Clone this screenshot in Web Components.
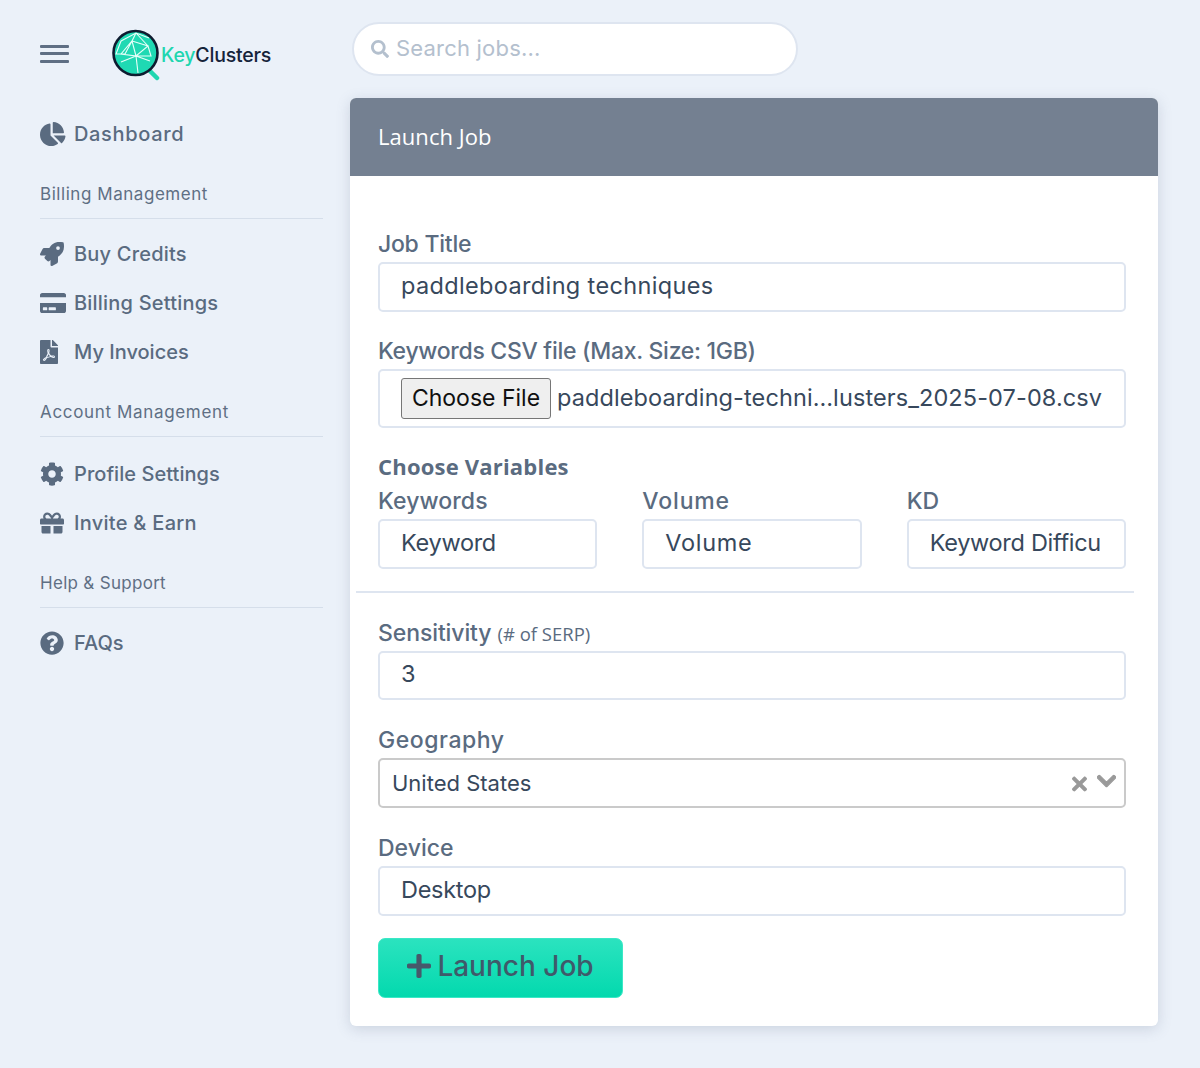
<!DOCTYPE html>
<html><head><meta charset="utf-8"><title>Launch Job</title>
<style>
html,body{margin:0;padding:0;height:1068px;overflow:hidden;background:#ebf1f9;font-family:Inter,"Liberation Sans",sans-serif;color:#5a6b80}
</style></head><body>
<app-shell>
  <side-bar slot="side">
    <top-brand></top-brand>
    <nav-item icon="pie" style="--ls:.65px">Dashboard</nav-item>
    <nav-section top="24" bottom="10" style="--ls:.55px">Billing Management</nav-section>
    <nav-item icon="rocket" style="--ls:.2px">Buy Credits</nav-item>
    <nav-item icon="card" style="--ls:.2px">Billing Settings</nav-item>
    <nav-item icon="pdf" style="--ls:0px">My Invoices</nav-item>
    <nav-section top="24" bottom="12" style="--ls:.66px">Account Management</nav-section>
    <nav-item icon="cog" style="--ls:.05px">Profile Settings</nav-item>
    <nav-item icon="gift" style="--ls:.28px">Invite &amp; Earn</nav-item>
    <nav-section top="24" bottom="10" style="--ls:.3px">Help &amp; Support</nav-section>
    <nav-item icon="help" style="--ls:0px">FAQs</nav-item>
  </side-bar>
  <main-area slot="main">
    <search-box>Search jobs...</search-box>
    <job-card heading="Launch Job">
      <form-field label="Job Title" style="--lls:-.25px"><text-box style="--ls:.35px">paddleboarding techniques</text-box></form-field>
      <form-field label="Keywords CSV file (Max. Size: 1GB)" style="--lls:-.29px;--after:27px"><file-box style="--ls:.1px">paddleboarding-techni…lusters_2025-07-08.csv</file-box></form-field>
      <var-group heading="Choose Variables">
        <form-field label="Keywords" flush style="--lls:.1px"><text-box style="--ls:-.3px">Keyword</text-box></form-field>
        <form-field label="Volume" flush style="--lls:.85px"><text-box style="--ls:.7px">Volume</text-box></form-field>
        <form-field label="KD" flush><text-box style="--ls:-.3px">Keyword Difficu</text-box></form-field>
      </var-group>
      <form-field label="Sensitivity" note="(# of SERP)" style="--lls:-.1px"><text-box>3</text-box></form-field>
      <form-field label="Geography" style="--lls:.55px;--after:28px"><select-box>United States</select-box></form-field>
      <form-field label="Device" style="--lls:0px;--after:22px"><text-box style="--ls:-.3px;--h:50px">Desktop</text-box></form-field>
      <launch-button>Launch Job</launch-button>
    </job-card>
  </main-area>
</app-shell>
<script>
const ICONS={
pie:['0 0 544 512','M527.79 288H290.5l158.03 158.03c6.04 6.04 15.98 6.53 22.19.68 38.7-36.46 65.32-85.61 73.13-140.86 1.34-9.46-6.51-17.85-16.06-17.85zm-15.83-64.8C503.72 103.74 408.26 8.28 288.8.04 279.68-.59 272 7.1 272 16.24V240h223.77c9.14 0 16.82-7.68 16.19-16.8zM224 288V50.71c0-9.55-8.39-17.4-17.85-16.06C86.99 51.49-4.1 155.6.14 280.37 4.5 408.51 114.83 513.59 243.03 511.98c50.4-.63 96.97-16.87 135.26-44.03 7.9-5.6 8.42-17.23 1.57-24.08L224 288z'],
rocket:['0 0 512 512','M505.12019,19.09375c-1.18945-5.53125-6.65819-11-12.207-12.1875C460.716,0,435.507,0,410.40747,0,307.17523,0,245.26909,55.20312,199.05238,128H94.83772c-16.34763.01562-35.55658,11.875-42.88664,26.48438L2.51562,253.29688A28.4,28.4,0,0,0,0,264a24.00867,24.00867,0,0,0,24.00582,24H127.81618l-22.47457,22.46875c-11.36521,11.36133-12.99607,32.25781,0,45.25L156.24582,406.625c11.15623,11.1875,32.15619,13.15625,45.27726,0l22.47457-22.46875V488a24.00867,24.00867,0,0,0,24.00581,24,28.55934,28.55934,0,0,0,10.707-2.51562l98.72834-49.39063c14.62888-7.29687,26.50776-26.5,26.50776-42.85937V312.79688c72.59753-46.3125,128.03493-108.40626,128.03493-211.09376C512.07526,76.5,512.07526,51.29688,505.12019,19.09375ZM384.04033,168A40,40,0,1,1,424.05,128,40.02322,40.02322,0,0,1,384.04033,168Z'],
card:['0 0 576 512','M0 432c0 26.5 21.5 48 48 48h480c26.5 0 48-21.5 48-48V256H0v176zm192-68c0-6.6 5.4-12 12-12h136c6.6 0 12 5.4 12 12v40c0 6.6-5.4 12-12 12H204c-6.6 0-12-5.4-12-12v-40zm-128 0c0-6.6 5.4-12 12-12h72c6.6 0 12 5.4 12 12v40c0 6.6-5.4 12-12 12H76c-6.6 0-12-5.4-12-12v-40zM576 80v48H0V80c0-26.5 21.5-48 48-48h480c26.5 0 48 21.5 48 48z'],
pdf:['0 0 384 512','M181.9 256.1c-5-16-4.9-46.9-2-46.9 8.4 0 7.6 36.9 2 46.9zm-1.7 47.2c-7.7 20.2-17.3 43.3-28.4 62.7 18.3-7 39-17.2 62.9-21.9-12.7-9.6-24.9-23.4-34.5-40.8zM86.1 428.1c0 .8 13.2-5.4 34.9-40.2-6.7 6.3-29.1 24.5-34.9 40.2zM248 160h136v328c0 13.3-10.7 24-24 24H24c-13.3 0-24-10.7-24-24V24C0 10.7 10.7 0 24 0h200v136c0 13.2 10.8 24 24 24zm-8 171.8c-20-12.2-33.3-29-42.7-53.8 4.5-18.5 11.6-46.6 6.2-64.2-4.7-29.4-42.4-26.5-47.8-6.8-5 18.3-.4 44.1 8.1 77-11.6 27.6-28.7 64.6-40.8 85.8-.1 0-.1.1-.2.1-27.1 13.9-73.6 44.5-54.5 68 5.6 6.9 16 10 21.5 10 17.9 0 35.7-18 61.1-61.8 25.8-8.5 54.1-19.1 79-23.2 21.7 11.8 47.1 19.5 64 19.5 29.2 0 31.2-32 19.7-43.4-13.9-13.6-54.3-9.7-73.6-7.2zM377 105L279 7c-4.5-4.5-10.6-7-17-7h-6v128h128v-6.1c0-6.3-2.5-12.4-7-16.9zm-74.1 255.3c4.1-2.7-2.5-11.9-42.8-9 37.1 15.8 42.8 9 42.8 9z'],
cog:['0 0 512 512','M487.4 315.7l-42.6-24.6c4.3-23.2 4.3-47 0-70.2l42.6-24.6c4.9-2.8 7.1-8.6 5.5-14-11.1-35.6-30-67.8-54.7-94.6-3.8-4.1-10-5.1-14.8-2.3L380.8 110c-17.9-15.4-38.5-27.3-60.8-35.1V25.8c0-5.6-3.9-10.5-9.4-11.7-36.7-8.2-74.3-7.8-109.2 0-5.5 1.2-9.4 6.1-9.4 11.7V75c-22.2 7.9-42.8 19.8-60.8 35.1L88.7 85.5c-4.9-2.8-11-1.9-14.8 2.3-24.7 26.7-43.6 58.9-54.7 94.6-1.7 5.4.6 11.2 5.5 14L67.3 221c-4.3 23.2-4.3 47 0 70.2l-42.6 24.6c-4.9 2.8-7.1 8.6-5.5 14 11.1 35.6 30 67.8 54.7 94.6 3.8 4.1 10 5.1 14.8 2.3l42.6-24.6c17.9 15.4 38.5 27.3 60.8 35.1v49.2c0 5.6 3.9 10.5 9.4 11.7 36.7 8.2 74.3 7.8 109.2 0 5.5-1.2 9.4-6.1 9.4-11.7v-49.2c22.2-7.9 42.8-19.8 60.8-35.1l42.6 24.6c4.9 2.8 11 1.9 14.8-2.3 24.7-26.7 43.6-58.9 54.7-94.6 1.5-5.5-.7-11.3-5.6-14.1zM256 336c-44.1 0-80-35.9-80-80s35.9-80 80-80 80 35.9 80 80-35.9 80-80 80z'],
gift:['0 0 512 512','M32 448c0 17.7 14.3 32 32 32h160V320H32v128zm256 32h160c17.7 0 32-14.3 32-32V320H288v160zm192-320h-42.1c6.2-12.1 10.1-25.5 10.1-40 0-48.5-39.5-88-88-88-41.6 0-68.5 21.3-103 68.3-34.5-47-61.4-68.3-103-68.3-48.5 0-88 39.5-88 88 0 14.5 3.8 27.9 10.1 40H32c-17.7 0-32 14.3-32 32v80c0 8.8 7.2 16 16 16h480c8.8 0 16-7.2 16-16v-80c0-17.7-14.3-32-32-32zm-326.1 0c-22.1 0-40-17.9-40-40s17.9-40 40-40c19.9 0 34.6 3.3 86.1 80h-86.1zm206.1 0h-86.1c51.4-76.5 65.7-80 86.1-80 22.1 0 40 17.9 40 40s-17.9 40-40 40z'],
help:['0 0 512 512','M504 256c0 136.997-111.043 248-248 248S8 392.997 8 256C8 119.083 119.043 8 256 8s248 111.083 248 248zM262.655 90c-54.497 0-89.255 22.957-116.549 63.758-3.536 5.286-2.353 12.415 2.715 16.258l34.699 26.31c5.205 3.947 12.621 3.008 16.665-2.122 17.864-22.658 30.113-35.797 57.303-35.797 20.429 0 45.698 13.148 45.698 32.958 0 14.976-12.363 22.667-32.534 33.976C247.128 238.528 216 254.941 216 296v4c0 6.627 5.373 12 12 12h56c6.627 0 12-5.373 12-12v-1.333c0-28.462 83.186-29.647 83.186-106.667 0-58.002-60.165-102-116.531-102zM256 338c-25.365 0-46 20.635-46 46 0 25.364 20.635 46 46 46s46-20.636 46-46c0-25.365-20.635-46-46-46z'],
search:['0 0 512 512','M505 442.7L405.3 343c-4.5-4.5-10.6-7-17-7H372c27.6-35.3 44-79.7 44-128C416 93.1 322.9 0 208 0S0 93.1 0 208s93.1 208 208 208c48.3 0 92.7-16.4 128-44v16.3c0 6.4 2.5 12.5 7 17l99.7 99.7c9.4 9.4 24.6 9.4 33.9 0l28.3-28.3c9.4-9.4 9.4-24.6.1-34zM208 336c-70.7 0-128-57.2-128-128 0-70.7 57.2-128 128-128 70.7 0 128 57.2 128 128 0 70.7-57.2 128-128 128z'],
plus:['0 0 448 512','M416 208H272V64c0-17.67-14.33-32-32-32h-32c-17.67 0-32 14.33-32 32v144H32c-17.67 0-32 14.33-32 32v32c0 17.67 14.33 32 32 32h144v144c0 17.67 14.33 32 32 32h32c17.67 0 32-14.33 32-32V304h144c17.67 0 32-14.33 32-32v-32c0-17.67-14.33-32-32-32z'],
times:['0 0 352 512','M242.72 256l100.07-100.07c12.28-12.28 12.28-32.19 0-44.48l-22.24-22.24c-12.28-12.28-32.19-12.28-44.48 0L176 189.28 75.93 89.21c-12.28-12.28-32.19-12.28-44.48 0L9.21 111.45c-12.28 12.28-12.28 32.19 0 44.48L109.28 256 9.21 356.07c-12.28 12.28-12.28 32.19 0 44.48l22.24 22.24c12.28 12.28 32.2 12.28 44.48 0L176 322.72l100.07 100.07c12.28 12.28 32.2 12.28 44.48 0l22.24-22.24c12.28-12.28 12.28-32.19 0-44.48L242.72 256z'],
chev:['0 0 448 512','M207.029 381.476L12.686 187.132c-9.373-9.373-9.373-24.569 0-33.941l22.667-22.667c9.357-9.357 24.522-9.375 33.901-.04L224 284.505l154.745-154.021c9.379-9.335 24.544-9.317 33.901.04l22.667 22.667c9.373 9.373 9.373 24.569 0 33.941L240.971 381.476c-9.373 9.372-24.569 9.372-33.942 0z']
};
const svg=(n,s='')=>`<svg viewBox="${ICONS[n][0]}" style="${s}" fill="currentColor" aria-hidden="true"><path d="${ICONS[n][1]}"/></svg>`;
const P='Inter,"Liberation Sans",sans-serif', O='"Open Sans","Liberation Sans",sans-serif';
class Base extends HTMLElement{
  constructor(){super();this.attachShadow({mode:'open'});}
  connectedCallback(){this.shadowRoot.innerHTML=this.html();}
}
const def=(tag,html)=>customElements.define(tag,class extends Base{html(){return html(this)}});
def('app-shell',()=>`<style>:host{display:flex;align-items:flex-start;width:1200px;box-sizing:border-box;padding-right:42px}
.s{flex:0 0 350px}.m{flex:1;min-width:0}</style><div class="s"><slot name="side"></slot></div><div class="m"><slot name="main"></slot></div>`);
def('side-bar',()=>`<style>:host{display:block;box-sizing:border-box;padding:0 27px 0 40px}</style><slot></slot>`);
def('top-brand',()=>`<style>:host{display:flex;align-items:center;height:109px;gap:43px;box-sizing:border-box;padding-bottom:1px}
.burger{display:flex;flex-direction:column;gap:4.5px;width:29px;flex:none;margin-top:-1px}
.burger i{display:block;height:3px;border-radius:1px;background:#5f6f84}
.logo{display:flex;align-items:center;margin-top:1px}
svg{width:50px;height:52px;flex:none;margin-right:-1px}
.t{font:500 19.5px/1 ${P};letter-spacing:-.2px;color:#15233a;margin-top:2px}.t b{font-weight:500;color:#1fd6b0}</style>
<div class="burger"><i></i><i></i><i></i></div>
<div class="logo"><svg viewBox="0 0 50 52" aria-hidden="true">
<path d="M38 42l7 7" stroke="#1fd6b0" stroke-width="4.5" stroke-linecap="round"/>
<circle cx="23.5" cy="24" r="22" fill="#1fd9b3" stroke="#0e1c30" stroke-width="2.6"/>
<path d="M9 12l15-8 13 5 M24 4l-4 8 16 5-12 10-4-15-11 13 15 2 2 17 M9 12l-5 13 9-0 M24 27l-15 6 M36 17l3 10-15 0 M24 27l14 5 M24 4l12 13 M20 12l-7 13" fill="none" stroke="#e8fff9" stroke-width="1.1"/>
</svg><span class="t"><b>Key</b>Clusters</span></div>`);
def('nav-item',e=>`<style>:host{display:flex;align-items:center;height:49px;color:#5a6b80;font:500 20px/24px ${P};letter-spacing:var(--ls,0)}
.i{flex:none;width:34px;display:flex;align-items:center}svg{height:var(--ih,24px);width:auto;max-width:26px;display:block}</style>
<span class="i">${svg(e.getAttribute('icon'))}</span><slot></slot>`);
def('nav-section',e=>`<style>:host{display:block;padding-top:${e.getAttribute('top')}px;padding-bottom:${e.getAttribute('bottom')}px;color:#5f6f84;font:400 17px/24px ${P};letter-spacing:var(--ls,0)}
.r{height:1px;background:#d5deea;margin-top:12px}</style><div><slot></slot></div><div class="r"></div>`);
def('main-area',()=>`<style>:host{display:block;padding-top:22px}</style><slot></slot>`);
def('search-box',()=>`<style>:host{display:flex;align-items:center;box-sizing:border-box;width:446px;height:54px;margin:0 0 22px 2px;background:#fff;border:2px solid #dee5f0;border-radius:27px;padding:0 0 2px 17px;color:#b4c0ce;font:400 22px/30px ${P};letter-spacing:.2px}
svg{width:18px;height:18px;margin:2px 7px 0 0;flex:none}</style>${svg('search')}<slot></slot>`);
def('job-card',e=>`<style>:host{display:block;background:#fff;border-radius:6px;box-shadow:0 3px 14px rgba(90,105,135,.22);overflow:hidden}
h2{margin:0;height:78px;box-sizing:border-box;padding:0 28px 2px;display:flex;align-items:center;background:#748091;color:#fff;font:400 22px/30px ${O};letter-spacing:.05px}
.b{padding:56px 32px 28px 28px}</style><h2>${e.getAttribute('heading')}</h2><div class="b"><slot></slot></div>`);
def('form-field',e=>`<style>:host{display:block;margin-bottom:${e.hasAttribute('flush')?0:'var(--after,27.5px)'}}
label{display:block;height:24px;margin-bottom:6px;color:#5a6b80;font:500 23px/24px ${P};letter-spacing:var(--lls,0);white-space:nowrap}
small{font:500 18.5px/24px ${O};letter-spacing:0;color:#5a6b80}</style>
<label>${e.getAttribute('label')}${e.hasAttribute('note')?` <small>${e.getAttribute('note')}</small>`:''}</label><slot></slot>`);
def('text-box',()=>`<style>:host{display:flex;align-items:center;box-sizing:border-box;height:var(--h,49.5px);padding:0 21px 2px;background:#fff;border:2px solid #dee5f0;border-radius:5px;color:#37485c;font:400 23.5px/30px ${P};letter-spacing:var(--ls,0);white-space:nowrap;overflow:hidden}</style><slot></slot>`);
def('file-box',()=>`<style>:host{display:flex;align-items:center;box-sizing:border-box;height:59px;padding:0 21px 2px;background:#fff;border:2px solid #dee5f0;border-radius:5px;color:#37485c;font:400 23.5px/30px ${P};letter-spacing:var(--ls,0);white-space:nowrap;overflow:hidden}
button{flex:none;box-sizing:border-box;width:150px;height:41px;margin:1px 6px 0 0;padding:0 0 1px;background:#efefef;border:1.5px solid #767676;border-radius:3px;color:#101010;font:400 23px/30px ${P};letter-spacing:0}</style><button type="button">Choose File</button><slot></slot>`);
def('select-box',()=>`<style>:host{display:flex;align-items:center;box-sizing:border-box;height:50px;padding:0 8px 0 12px;background:#fff;border:2px solid #cacaca;border-radius:5px;color:#37485c;font:400 22px/30px ${P};white-space:nowrap}
.t{flex:1}svg{flex:none;color:#999;display:block}</style><span class="t"><slot></slot></span>${svg('times','height:22px;width:15px;margin:2px 10px 0 0')}${svg('chev','height:22px;width:19px;margin-top:-3px;stroke:currentColor;stroke-width:26')}`);
def('var-group',e=>`<style>:host{display:block;margin-bottom:28px}
h3{margin:0 0 10px;height:24px;color:#5a6b80;font:700 22px/22px ${O};letter-spacing:.2px}
.g{display:grid;grid-template-columns:repeat(3,1fr);column-gap:45px;padding-bottom:22.5px}
hr{border:0;height:1.5px;background:#dee5f0;margin:0 -8px 0 -22px}</style>
<h3>${e.getAttribute('heading')}</h3><div class="g"><slot></slot></div><hr>`);
def('launch-button',()=>`<style>:host{display:inline-flex;align-items:center;justify-content:center;box-sizing:border-box;width:245px;height:60px;padding-bottom:4px;background:linear-gradient(#2be3bf,#03d9ae);border:1px solid #3be8c6;border-radius:7px;color:#3f5a6a;font:500 28px/36px ${P};vertical-align:top}
svg{width:24px;height:28px;margin-right:6px;color:#47596b;flex:none}</style>${svg('plus')}<slot></slot>`);
</script>
</body></html>
